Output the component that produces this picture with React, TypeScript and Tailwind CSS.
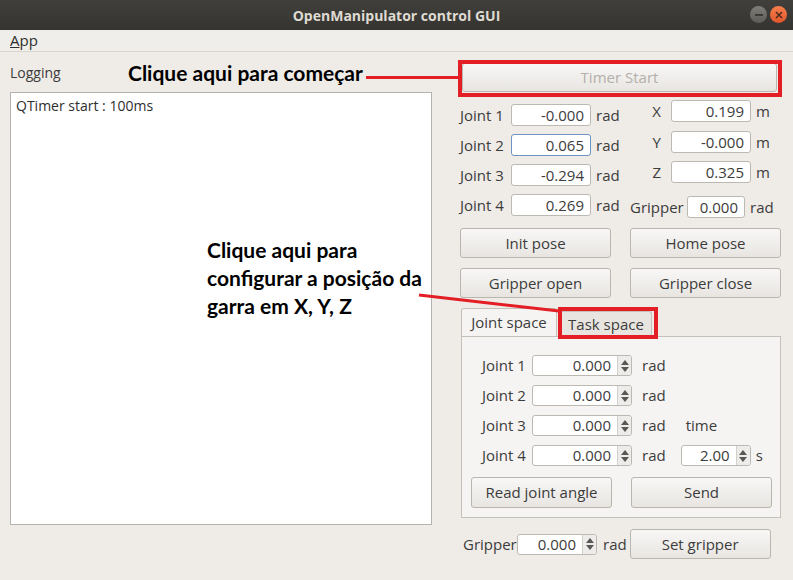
import React from "react"

const ui = { fontFamily: '"Open Sans", "Noto Sans", sans-serif' }
const note = { fontFamily: 'Lato, "Open Sans", sans-serif' }

function Field({ value, w, focus }: { value: string; w: string; focus?: boolean }) {
  return (
    <div
      className={`${w} h-[22px] bg-white rounded-[3px] border flex items-center justify-end pr-[6px] ${
        focus ? "border-[#6e93c2]" : "border-[#bcb8b2]"
      }`}
    >
      {value}
    </div>
  )
}

function Spin({ value, w }: { value: string; w: string }) {
  return (
    <div className={`${w} h-[21px] bg-white rounded-[3px] border border-[#bcb8b2] flex`}>
      <div className="flex-1 flex items-center justify-end pr-[6px]">{value}</div>
      <div className="w-[14px] bg-[#eeecea] border-l border-[#d3d0cb] flex flex-col items-center justify-center gap-[2px] rounded-r-[3px]">
        <svg width="8" height="5" viewBox="0 0 8 5">
          <path d="M0 5 L4 0 L8 5 Z" fill="#5a5855" />
        </svg>
        <svg width="8" height="5" viewBox="0 0 8 5">
          <path d="M0 0 L4 5 L8 0 Z" fill="#5a5855" />
        </svg>
      </div>
    </div>
  )
}

function Btn({ label, w, h = "h-[30px]", muted }: { label: string; w: string; h?: string; muted?: boolean }) {
  return (
    <div
      className={`${w} ${h} rounded-[3px] border border-[#b9b5af] bg-gradient-to-b from-[#f8f7f6] to-[#e8e5e1] flex items-center justify-center ${
        muted ? "text-[#b3afaa]" : "text-[#3c3c3c]"
      }`}
    >
      {label}
    </div>
  )
}

export default function App() {
  const joints = [
    ["Joint 1", "-0.000"],
    ["Joint 2", "0.065"],
    ["Joint 3", "-0.294"],
    ["Joint 4", "0.269"],
  ]

  return (
    <div className="relative w-[793px] h-[580px] overflow-hidden bg-[#efebe7] text-[15px] text-[#3c3c3c]" style={ui}>
      {/* title bar */}
      <div className="h-[30px] bg-gradient-to-b from-[#403f3b] to-[#353430] flex items-center justify-center relative">
        <span className="text-[#dfdbd2] font-bold text-[14px]">OpenManipulator control GUI</span>
        <div className="absolute right-[6px] top-[6px] flex gap-[3px]">
          <div className="w-[17px] h-[17px] rounded-full bg-gradient-to-b from-[#807e79] to-[#5e5c58] flex items-center justify-center">
            <div className="w-[8px] h-[2px] bg-[#3b3a37]" />
          </div>
          <div className="w-[17px] h-[17px] rounded-full bg-gradient-to-b from-[#f77e4d] to-[#e0562a] flex items-center justify-center">
            <svg width="8" height="8" viewBox="0 0 8 8">
              <path d="M1 1 L7 7 M7 1 L1 7" stroke="#4a2a1c" strokeWidth="1.5" />
            </svg>
          </div>
        </div>
      </div>

      {/* menu bar */}
      <div className="h-[22px] bg-[#f0eeea] border-b border-[#d8d4ce] flex items-center px-[10px] text-[#2e2e2e]">
        <span>
          <span className="underline">A</span>pp
        </span>
      </div>

      <div className="flex">
        {/* left: logging */}
        <div className="w-[450px] pl-[10px] pt-[12px]">
          <div className="h-[18px] leading-[18px] text-[14px]">Logging</div>
          <div className="mt-[10px] w-[422px] h-[433px] bg-white border border-[#b6b3ae] px-[5px] pt-[2px] text-[14px] text-[#2e2e2e]">
            QTimer start : 100ms
          </div>
        </div>

        {/* right: controls */}
        <div className="w-[333px] pt-[11px]">
          <div className="ml-[12px] w-[315px]">
            <Btn label="Timer Start" w="w-[315px]" h="h-[29px]" muted />
          </div>

          <div className="flex mt-[8px] ml-[10px]">
            <div className="w-[170px] pt-[4px] flex flex-col gap-[8px]">
              {joints.map(([l, v], i) => (
                <div key={l} className="flex items-center h-[22px]">
                  <span className="w-[51px]">{l}</span>
                  <Field value={v} w="w-[80px]" focus={i === 1} />
                  <span className="ml-[5px]">rad</span>
                </div>
              ))}
            </div>
            <div className="flex flex-col">
              {[
                ["X", "0.199", "mt-[0px]"],
                ["Y", "-0.000", "mt-[9px]"],
                ["Z", "0.325", "mt-[8px]"],
              ].map(([l, v, m]) => (
                <div key={l} className={`flex items-center h-[22px] ${m}`}>
                  <span className="w-[41px] text-right pr-[10px]">{l}</span>
                  <Field value={v} w="w-[80px]" />
                  <span className="ml-[5px]">m</span>
                </div>
              ))}
              <div className="flex items-center h-[22px] mt-[13px]">
                <span className="w-[57px]">Gripper</span>
                <Field value="0.000" w="w-[58px]" />
                <span className="ml-[5px]">rad</span>
              </div>
            </div>
          </div>

          <div className="ml-[10px] mt-[10px] grid grid-cols-[151px_151px] gap-x-[19px] gap-y-[10px]">
            <Btn label="Init pose" w="w-[151px]" />
            <Btn label="Home pose" w="w-[151px]" />
            <Btn label="Gripper open" w="w-[151px]" />
            <Btn label="Gripper close" w="w-[151px]" />
          </div>

          {/* tabs */}
          <div className="ml-[11px] mt-[10px] w-[320px]">
            <div className="flex h-[28px] items-end">
              <div className="w-[96px] h-[28px] bg-[#f6f4f2] border border-b-0 border-[#c4c0ba] rounded-t-[3px] flex items-center justify-center">
                Joint space
              </div>
              <div className="ml-[3px] w-[92px] h-[25px] bg-[#e8e5e1] border border-b-0 border-[#c4c0ba] rounded-t-[3px] flex items-center justify-center">
                Task space
              </div>
            </div>
            <div className="h-[182px] bg-[#f6f4f2] border border-[#c4c0ba] pt-[18px]">
              <div className="flex">
                <div className="flex flex-col gap-[9px] pl-[20px]">
                  {["Joint 1", "Joint 2", "Joint 3", "Joint 4"].map((l) => (
                    <div key={l} className="flex items-center h-[21px]">
                      <span className="w-[50px]">{l}</span>
                      <Spin value="0.000" w="w-[100px]" />
                      <span className="ml-[10px]">rad</span>
                    </div>
                  ))}
                </div>
                <div className="flex flex-col ml-[15px] pt-[60px]">
                  <div className="h-[21px] flex items-center pl-[5px]">time</div>
                  <div className="flex items-center h-[21px] mt-[9px]">
                    <Spin value="2.00" w="w-[70px]" />
                    <span className="ml-[5px]">s</span>
                  </div>
                </div>
              </div>
              <div className="flex gap-[19px] pl-[9px] mt-[11px]">
                <Btn label="Read joint angle" w="w-[141px]" h="h-[31px]" />
                <Btn label="Send" w="w-[141px]" h="h-[31px]" />
              </div>
            </div>
          </div>

          <div className="flex items-center ml-[13px] mt-[11px]">
            <span className="w-[54px]">Gripper</span>
            <Spin value="0.000" w="w-[80px]" />
            <span className="ml-[6px]">rad</span>
            <div className="ml-[3px]">
              <Btn label="Set gripper" w="w-[141px]" />
            </div>
          </div>
        </div>
      </div>

      {/* annotations */}
      <div className="absolute left-[458px] top-[60px] w-[324px] h-[37px] border-[4px] border-[#e31e24]" />
      <div className="absolute left-[366px] top-[76px] w-[94px] h-[3px] bg-[#e31e24]" />
      <div className="absolute left-[128px] top-[59px] text-[21px] font-bold text-black leading-[28px]" style={note}>
        Clique aqui para começar
      </div>

      <div className="absolute left-[558px] top-[307px] w-[100px] h-[32px] border-[4px] border-[#e31e24]" />
      <svg className="absolute left-0 top-0" width="793" height="580" viewBox="0 0 793 580">
        <path d="M419 295 L559 311" stroke="#e31e24" strokeWidth="3" />
      </svg>
      <div className="absolute left-[207px] top-[236px] text-[21px] font-bold text-black leading-[28px]" style={note}>
        Clique aqui para
        <br />
        configurar a posição da
        <br />
        garra em X, Y, Z
      </div>
    </div>
  )
}
